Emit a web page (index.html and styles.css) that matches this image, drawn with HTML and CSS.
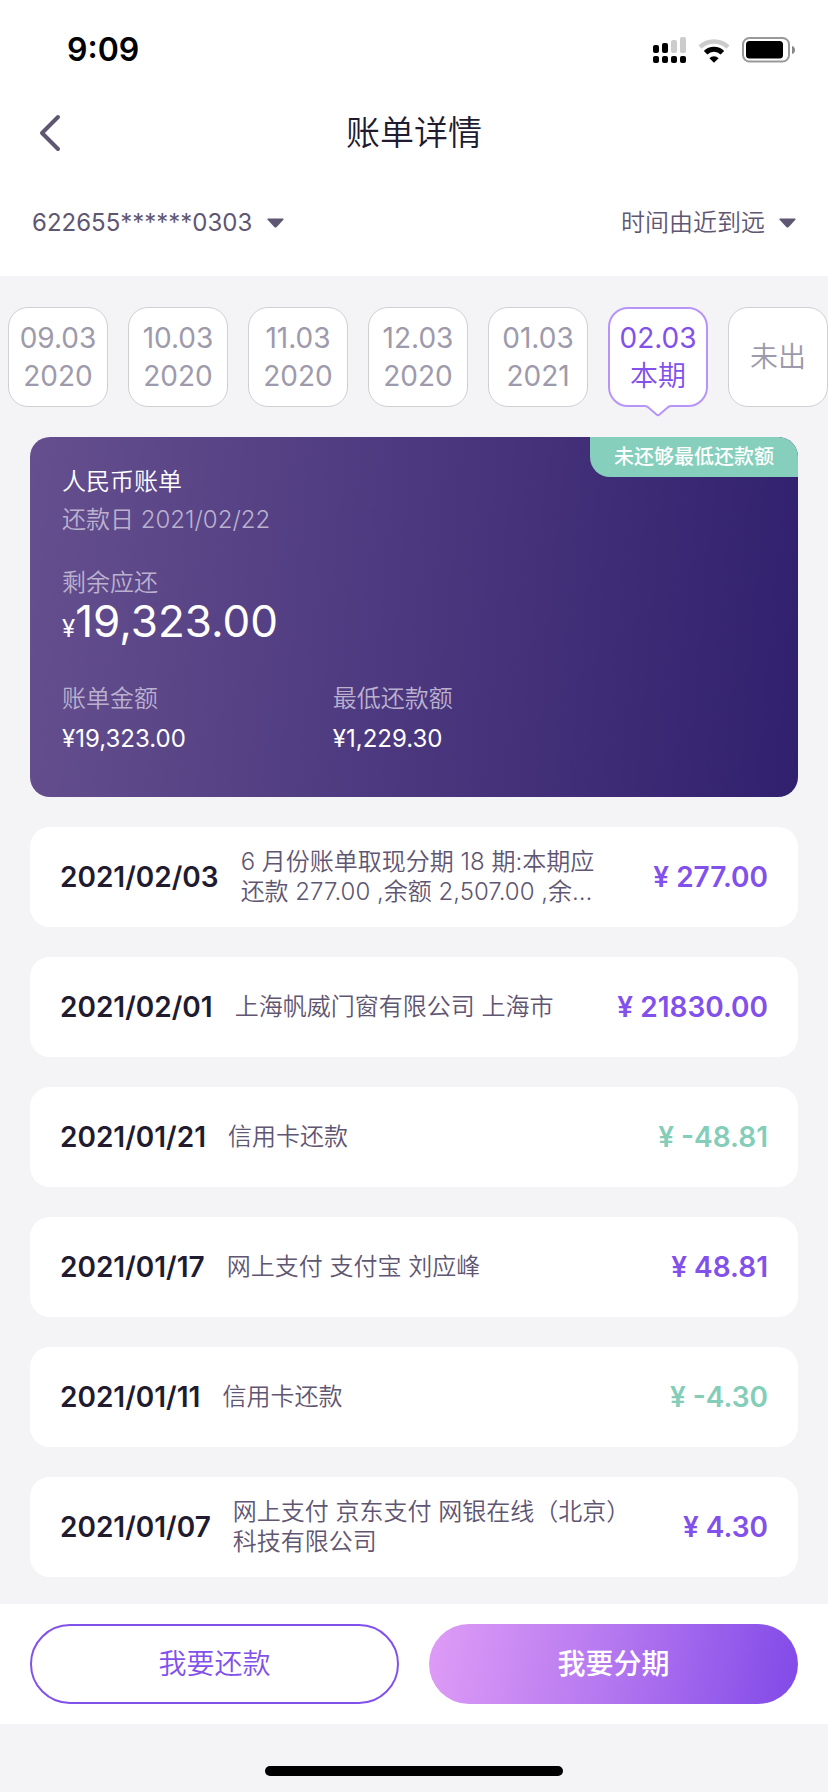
FILE: index.html
```html
<!DOCTYPE html>
<html lang="zh-CN">
<head>
<meta charset="utf-8">
<meta name="viewport" content="width=device-width, initial-scale=1">
<title>账单详情</title>
<link rel="stylesheet" href="styles.css">
</head>
<body>
<header class="header">
  <div class="status">
    <span class="status-time">9:09</span>
    <div class="status-icons">
      <svg width="33" height="26" viewBox="0 0 33 26" aria-hidden="true">
        <g fill="#000"><rect x="0" y="8" width="6" height="8" rx="2"/><rect x="9" y="6" width="6" height="10" rx="2"/><rect x="0" y="19" width="6" height="7" rx="2"/><rect x="9" y="19" width="6" height="7" rx="2"/><rect x="18" y="19" width="6" height="7" rx="2"/><rect x="27" y="19" width="6" height="7" rx="2"/></g>
        <g fill="#ccc"><rect x="18" y="3" width="6" height="13" rx="2"/><rect x="27" y="0" width="6" height="16" rx="2"/></g>
      </svg>
      <svg width="32" height="26" viewBox="0 0 32 26" aria-hidden="true">
        <path d="M2 10.2a20 20 0 0 1 28 0" fill="none" stroke="#ccc" stroke-width="4.6"/>
        <path d="M7.6 15.8a12 12 0 0 1 16.8 0" fill="none" stroke="#000" stroke-width="5"/>
        <path d="M16 25.8l-4.6-4.6a6.600 6.600 0 0 1 9.200 0z" fill="#000"/>
      </svg>
      <svg width="54" height="26" viewBox="0 0 54 26" aria-hidden="true">
        <rect x="1" y="1" width="46" height="23.500" rx="6.500" fill="none" stroke="#999" stroke-width="2"/>
        <rect x="4" y="4" width="37" height="17.500" rx="3.500" fill="#000"/>
        <path d="M50 9c2 .4 3 2 3 4s-1 3.600-3 4z" fill="#888"/>
      </svg>
    </div>
  </div>
  <div class="nav">
    <button class="back" type="button" aria-label="返回">
      <svg width="22" height="38" viewBox="0 0 22 38" aria-hidden="true"><path d="M19 3L3 19l16 16" fill="none" stroke="#5f5672" stroke-width="4" stroke-linecap="round" stroke-linejoin="round"/></svg>
    </button>
    <h1 class="title">账单详情</h1>
  </div>
  <div class="filters">
    <label class="filter filter-card">
      <select aria-label="卡号"><option>622655******0303</option></select>
      <svg width="17" height="10" viewBox="0 0 17 10" aria-hidden="true"><path d="M1 .5h15q1 .4.400 1.200L9.700 9q-1.200 1-2.400 0L.600 1.700Q0 .9 1 .5z" fill="#5f5672"/></svg>
    </label>
    <label class="filter">
      <select aria-label="排序"><option>时间由近到远</option></select>
      <svg width="17" height="10" viewBox="0 0 17 10" aria-hidden="true"><path d="M1 .5h15q1 .4.400 1.200L9.700 9q-1.200 1-2.400 0L.600 1.700Q0 .9 1 .5z" fill="#5f5672"/></svg>
    </label>
  </div>
</header>

<main class="content">
  <nav class="months" aria-label="账单月份">
    <button class="month" type="button">09.03<br>2020</button>
    <button class="month" type="button">10.03<br>2020</button>
    <button class="month" type="button">11.03<br>2020</button>
    <button class="month" type="button">12.03<br>2020</button>
    <button class="month" type="button">01.03<br>2021</button>
    <button class="month month-active" type="button" aria-current="true">02.03<br><span class="month-word">本期</span>
      <svg class="month-pointer" width="26" height="12" viewBox="0 0 26 12" aria-hidden="true"><path d="M0 0h26v1l-3 1-10 9L3 2 0 1z" fill="#fff"/><path d="M0 1q2 0 4 2l7.500 6.500q1.500 1.200 3 0L22 3q2-2 4-2" fill="none" stroke="#b794f8" stroke-width="2"/></svg>
    </button>
    <button class="month" type="button"><span class="month-word">未出</span></button>
  </nav>

  <section class="bill">
    <span class="badge">未还够最低还款额</span>
    <h2 class="bill-name">人民币账单</h2>
    <p class="bill-due">还款日 2021/02/22</p>
    <p class="bill-label">剩余应还</p>
    <p class="bill-total"><span class="bill-currency">¥</span>19,323.00</p>
    <dl class="bill-figures">
      <div><dt>账单金额</dt><dd>¥19,323.00</dd></div>
      <div><dt>最低还款额</dt><dd>¥1,229.30</dd></div>
    </dl>
  </section>

  <ul class="records">
    <li class="record"><time class="date">2021/02/03</time><p class="desc">6 月份账单取现分期 18 期:本期应还款 277.00 ,余额 2,507.00 ,余…</p><span class="amount">¥ 277.00</span></li>
    <li class="record"><time class="date">2021/02/01</time><p class="desc">上海帆威门窗有限公司 上海市</p><span class="amount">¥ 21830.00</span></li>
    <li class="record"><time class="date">2021/01/21</time><p class="desc">信用卡还款</p><span class="amount amount-in">¥ -48.81</span></li>
    <li class="record"><time class="date">2021/01/17</time><p class="desc">网上支付 支付宝 刘应峰</p><span class="amount">¥ 48.81</span></li>
    <li class="record"><time class="date">2021/01/11</time><p class="desc">信用卡还款</p><span class="amount amount-in">¥ -4.30</span></li>
    <li class="record"><time class="date">2021/01/07</time><p class="desc">网上支付 京东支付 网银在线（北京）科技有限公司</p><span class="amount">¥ 4.30</span></li>
  </ul>
</main>

<footer class="actions">
  <button class="action action-outline" type="button">我要还款</button>
  <button class="action action-solid" type="button">我要分期</button>
</footer>
<div class="home"><span class="home-bar"></span></div>
</body>
</html>
```
FILE: styles.css
```css
* { box-sizing: border-box; }

body {
  margin: 0;
  min-height: 100vh;
  display: flex;
  flex-direction: column;
  background: #f4f4f7;
  color: #211b30;
  font-family: Inter, "Noto Sans CJK SC", sans-serif;
  font-size: 24px;
  font-weight: 350;
  line-height: 30px;
}

h1, h2, p, ul, dl, dd { margin: 0; padding: 0; }
h1, h2 { font-weight: inherit; }
button, select { font: inherit; color: inherit; margin: 0; padding: 0; border: 0; background: none; }
svg { display: block; flex: none; }

.header { background: #fff; padding-bottom: 8px; }

.status {
  height: 88px;
  padding: 12px 32px 0 67px;
  display: flex;
  align-items: center;
  justify-content: space-between;
  color: #000;
}
.status-time { font-size: 32px; font-weight: 600; }
.status-icons { display: flex; gap: 12px; }

.nav {
  height: 90px;
  padding: 0 39px;
  display: grid;
  grid-template-columns: 1fr auto 1fr;
  align-items: center;
}
.back { justify-self: start; }
.title { font-size: 34px; line-height: 44px; }

.filters {
  height: 90px;
  padding: 0 32px;
  display: flex;
  align-items: center;
  justify-content: space-between;
  color: #5f5672;
}
.filter { display: flex; align-items: center; gap: 14px; }
.filter select { appearance: none; height: 36px; }
.filter-card { font-weight: 400; }

.content { flex: 1; }

.months {
  display: flex;
  gap: 20px;
  padding: 31px 0 30px 8px;
  overflow: hidden;
}
.month {
  position: relative;
  flex: none;
  width: 100px;
  height: 100px;
  border: 1px solid #cfcfd4;
  border-radius: 20px;
  background: #fff;
  color: #9d9aab;
  font-size: 28px;
  font-weight: 400;
  line-height: 38px;
}
.month-word { font-weight: 350; }
.month-active { border: 2px solid #b794f8; color: #8250ea; }
.month-pointer { position: absolute; top: 100%; left: 50%; margin-left: -13px; }

.bill {
  position: relative;
  margin: 0 30px;
  padding: 28px 32px 40px;
  border-radius: 20px;
  background: linear-gradient(95deg, #654f8e, #31206e);
  color: #fff;
  overflow: hidden;
}
.badge {
  position: absolute;
  top: 0;
  right: 0;
  padding: 0 24px;
  border-bottom-left-radius: 20px;
  background: #86cfbc;
  font-size: 20px;
  font-weight: 500;
  line-height: 40px;
}
.bill-name { font-size: 24px; line-height: 34px; }
.bill-due { margin-top: 4px; line-height: 34px; color: #bbb1cf; }
.bill-label { margin-top: 30px; line-height: 32px; color: #bbb1cf; }
.bill-total { font-size: 44px; font-weight: 400; line-height: 44px; }
.bill-currency { font-size: 24px; }
.bill-figures {
  margin-top: 30px;
  display: grid;
  grid-template-columns: 5fr 8fr;
}
.bill-figures dt { line-height: 36px; color: #bbb1cf; }
.bill-figures dd { margin-top: 4px; font-weight: 400; line-height: 36px; }

.records {
  list-style: none;
  margin: 30px 30px 26px;
  display: grid;
  gap: 30px;
}
.record {
  min-height: 100px;
  padding: 20px 30px;
  display: flex;
  align-items: center;
  border-radius: 20px;
  background: #fff;
}
.date { font-size: 28px; font-weight: 600; }
.desc { flex: 1; margin: 0 40px 0 22px; color: #5f5672; }
.amount { font-size: 28px; font-weight: 600; color: #8250ea; white-space: nowrap; }
.amount-in { color: #83cdb9; }

.actions {
  display: grid;
  grid-template-columns: 1fr 1fr;
  gap: 30px;
  padding: 20px 30px;
  background: #fff;
}
.action {
  height: 80px;
  border-radius: 40px;
  font-size: 28px;
}
.action-outline { border: 2px solid #8250ea; color: #8250ea; }
.action-solid { background: linear-gradient(100deg, #df9cf6, #b87bf0 45%, #8149e8); color: #fff; font-weight: 500; }

.home { height: 68px; padding-top: 42px; }
.home-bar { display: block; width: 36%; height: 10px; margin: 0 auto; border-radius: 5px; background: #000; }
```
